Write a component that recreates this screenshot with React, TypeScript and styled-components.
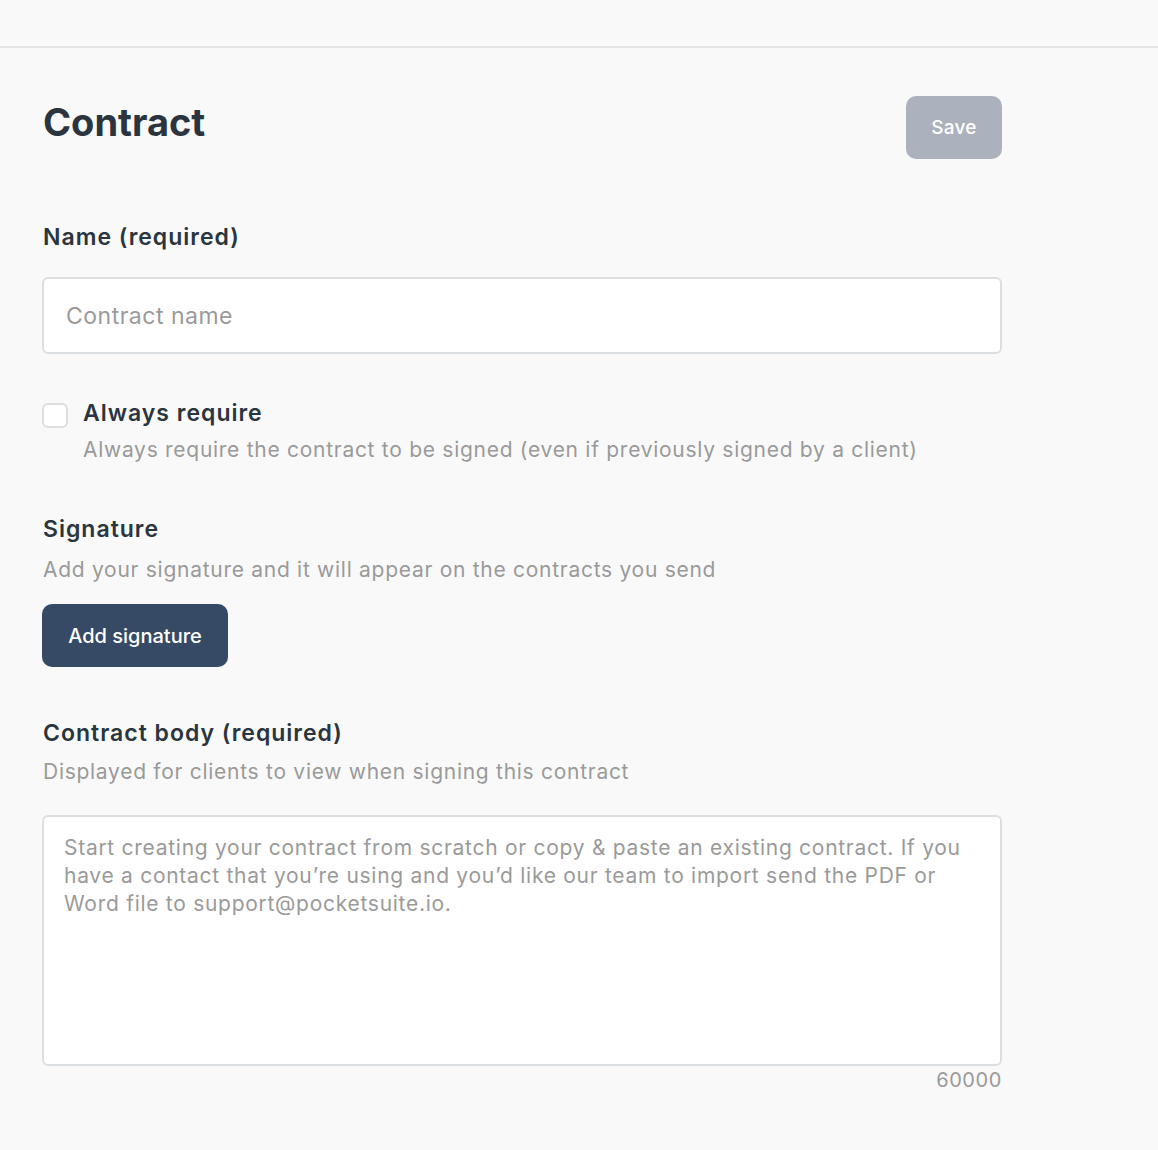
import React from 'react';
import styled, {createGlobalStyle} from 'styled-components';

const GlobalStyle = createGlobalStyle`
    body {
        margin: 0;
        background: #f9f9f9;
        font-family: Inter, "Noto Sans", sans-serif;
        color: #2b353f;
    }
`;

const App: React.FunctionComponent = () => {
    const [always, setAlways] = React.useState(false);
    const [body, setBody] = React.useState('');
    return (
        <Wrapper>
            <GlobalStyle/>
            <TopBar/>
            <Content>
                <Header>
                    <Title>Contract</Title>
                    <SaveButton disabled>Save</SaveButton>
                </Header>

                <Section $bottom={44}>
                    <Label>Name (required)</Label>
                    <TextInput placeholder="Contract name"/>
                </Section>

                <CheckRow>
                    <CheckBox type="checkbox" checked={always} onChange={() => setAlways(!always)}/>
                    <div>
                        <Label>Always require</Label>
                        <Hint $top={8}>Always require the contract to be signed (even if previously signed by a client)</Hint>
                    </div>
                </CheckRow>

                <Section $bottom={51}>
                    <Label>Signature</Label>
                    <Hint $top={12}>Add your signature and it will appear on the contracts you send</Hint>
                    <PrimaryButton>Add signature</PrimaryButton>
                </Section>

                <Section $bottom={40}>
                    <Label>Contract body (required)</Label>
                    <Hint $top={10}>Displayed for clients to view when signing this contract</Hint>
                    <TextArea
                        value={body}
                        onChange={(e) => setBody(e.target.value)}
                        placeholder="Start creating your contract from scratch or copy & paste an existing contract. If you have a contact that you’re using and you’d like our team to import send the PDF or Word file to support@pocketsuite.io."
                    />
                    <Counter>{60000 - body.length}</Counter>
                </Section>
            </Content>
        </Wrapper>
    );
}

const Wrapper = styled.div`
    min-height: 1150px;
    display: flex;
    flex-direction: column;
`;

const TopBar = styled.div`
    height: 46px;
    border-bottom: 2px solid #e4e4e4;
`;

const Content = styled.div`
    width: 960px;
    padding: 48px 0 0 42px;
    display: flex;
    flex-direction: column;
`;

const Header = styled.div`
    display: flex;
    align-items: flex-start;
    justify-content: space-between;
    margin-bottom: 63px;
`;

const Title = styled.h1`
    margin: 1px 0 0 0;
    padding: 0 1px;
    font-size: 38px;
    font-weight: 700;
    line-height: 50px;
`;

const SaveButton = styled.button`
    width: 96px;
    height: 63px;
    border: none;
    border-radius: 10px;
    background: #acb2bd;
    color: #ffffff;
    font-family: Inter, sans-serif;
    font-size: 19px;
    font-weight: 500;
    letter-spacing: 0.2px;
`;

const Section = styled.div<{$bottom: number}>`
    display: flex;
    flex-direction: column;
    align-items: flex-start;
    margin-bottom: ${(p) => p.$bottom}px;
`;

const Label = styled.div`
    font-size: 23px;
    font-weight: 600;
    line-height: 30px;
    padding-left: 1px;
    letter-spacing: 1px;
`;

const Hint = styled.div<{$top: number}>`
    margin-top: ${(p) => p.$top}px;
    font-size: 21px;
    line-height: 28px;
    color: #9a9a9a;
    letter-spacing: 0.72px;
    padding-left: 1px;
`;

const TextInput = styled.input`
    box-sizing: border-box;
    width: 100%;
    height: 77px;
    margin-top: 25px;
    padding: 0 22px;
    border: 2px solid #dcdfe2;
    border-radius: 6px;
    background: #ffffff;
    font-family: Inter, sans-serif;
    font-size: 23px;
    letter-spacing: 0.5px;
    color: #2b353f;
    outline: none;
    &::placeholder {
        color: #9a9a9a;
    }
`;

const CheckRow = styled.div`
    display: flex;
    align-items: flex-start;
    gap: 14px;
    margin-bottom: 50px;
`;

const CheckBox = styled.input`
    appearance: none;
    flex-shrink: 0;
    width: 26px;
    height: 25px;
    margin: 5px 0 0 0;
    border: 2px solid #dcdfe2;
    border-radius: 6px;
    background: #ffffff;
    &:checked {
        background: #364a66;
        border-color: #364a66;
    }
`;

const PrimaryButton = styled.button`
    margin-top: 20px;
    width: 186px;
    height: 63px;
    border: none;
    border-radius: 10px;
    background: #364a66;
    color: #ffffff;
    font-family: Inter, sans-serif;
    font-size: 20px;
    font-weight: 500;
`;

const TextArea = styled.textarea`
    box-sizing: border-box;
    width: 100%;
    height: 251px;
    margin-top: 29px;
    padding: 17px 20px;
    border: 2px solid #dcdfe2;
    border-radius: 6px;
    background: #ffffff;
    font-family: Inter, sans-serif;
    font-size: 21px;
    line-height: 28px;
    letter-spacing: 0.72px;
    color: #2b353f;
    resize: none;
    outline: none;
    &::placeholder {
        color: #9a9a9a;
    }
`;

const Counter = styled.div`
    align-self: flex-end;
    margin-top: 1px;
    font-size: 20px;
    line-height: 26px;
    letter-spacing: 0.6px;
    color: #9a9a9a;
`;

export default App;
